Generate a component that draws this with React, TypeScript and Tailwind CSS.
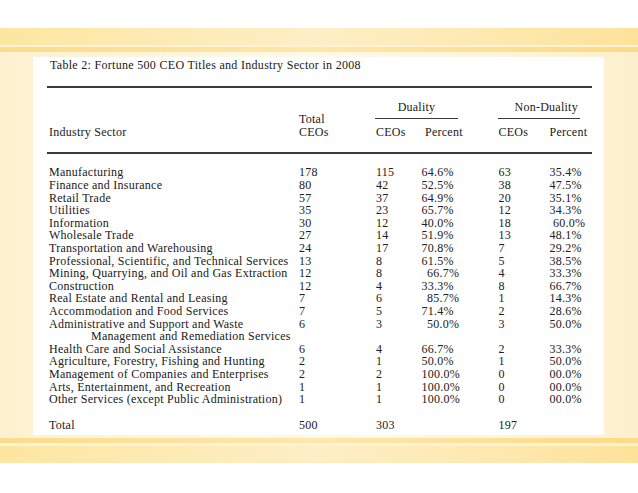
type Row = {
  sector: string;
  total: string;
  dc: string;
  dp: string;
  nc: string;
  np: string;
  dpShift?: boolean;
  npShift?: boolean;
  sub?: string;
};

const rows: Row[] = [
  { sector: "Manufacturing", total: "178", dc: "115", dp: "64.6%", nc: "63", np: "35.4%" },
  { sector: "Finance and Insurance", total: "80", dc: "42", dp: "52.5%", nc: "38", np: "47.5%" },
  { sector: "Retail Trade", total: "57", dc: "37", dp: "64.9%", nc: "20", np: "35.1%" },
  { sector: "Utilities", total: "35", dc: "23", dp: "65.7%", nc: "12", np: "34.3%" },
  { sector: "Information", total: "30", dc: "12", dp: "40.0%", nc: "18", np: "60.0%", npShift: true },
  { sector: "Wholesale Trade", total: "27", dc: "14", dp: "51.9%", nc: "13", np: "48.1%" },
  { sector: "Transportation and Warehousing", total: "24", dc: "17", dp: "70.8%", nc: "7", np: "29.2%" },
  { sector: "Professional, Scientific, and Technical Services", total: "13", dc: "8", dp: "61.5%", nc: "5", np: "38.5%" },
  { sector: "Mining, Quarrying, and Oil and Gas Extraction", total: "12", dc: "8", dp: "66.7%", nc: "4", np: "33.3%", dpShift: true },
  { sector: "Construction", total: "12", dc: "4", dp: "33.3%", nc: "8", np: "66.7%" },
  { sector: "Real Estate and Rental and Leasing", total: "7", dc: "6", dp: "85.7%", nc: "1", np: "14.3%", dpShift: true },
  { sector: "Accommodation and Food Services", total: "7", dc: "5", dp: "71.4%", nc: "2", np: "28.6%" },
  {
    sector: "Administrative and Support and Waste",
    total: "6",
    dc: "3",
    dp: "50.0%",
    nc: "3",
    np: "50.0%",
    dpShift: true,
    sub: "Management and Remediation Services",
  },
  { sector: "Health Care and Social Assistance", total: "6", dc: "4", dp: "66.7%", nc: "2", np: "33.3%" },
  { sector: "Agriculture, Forestry, Fishing and Hunting", total: "2", dc: "1", dp: "50.0%", nc: "1", np: "50.0%" },
  { sector: "Management of Companies and Enterprises", total: "2", dc: "2", dp: "100.0%", nc: "0", np: "00.0%" },
  { sector: "Arts, Entertainment, and Recreation", total: "1", dc: "1", dp: "100.0%", nc: "0", np: "00.0%" },
  { sector: "Other Services (except Public Administration)", total: "1", dc: "1", dp: "100.0%", nc: "0", np: "00.0%" },
];

const cols = "grid grid-cols-[250px_77px_45.5px_77px_51px_44px]";

export default function App() {
  return (
    <div
      className="w-[638px] h-[493px] bg-white flex flex-col overflow-hidden text-[#202020]"
      style={{ fontFamily: '"Liberation Serif", "Times New Roman", serif' }}
    >
      <div className="h-[28px] shrink-0" />
      {/* top band */}
      <div className="h-[17px] shrink-0 bg-gradient-to-r from-[#fde6a0] via-[#fdefc6] to-[#fde29a]" />
      <div className="h-[2px] shrink-0 bg-[#fef3d4]" />
      <div className="h-[5px] shrink-0 bg-gradient-to-r from-[#fcdc8c] via-[#fde7aa] to-[#fcda86]" />

      {/* page */}
      <div className="h-[386px] shrink-0 bg-gradient-to-r from-[#fdf1d0] via-[#fef9ea] to-[#fdf0cc] pt-[5px]">
        <div className="ml-[33px] w-[571px] h-[378px] bg-white">
          <div className="pt-[1px] pl-[17px] text-[12px] tracking-[0.3px] leading-[14px] whitespace-nowrap">
            Table 2: Fortune 500 CEO Titles and Industry Sector in 2008
          </div>
          <div className="mt-[14px] ml-[14px] w-[545px] h-[2px] bg-[#3a3a3a]" />

          {/* header */}
          <div className={`${cols} ml-[16px] mt-[12.7px] text-[12px] tracking-[0.25px] leading-[12.6px]`}>
            <div className="col-start-2 row-start-1 row-span-2 self-end">
              Total
              <br />
              CEOs
            </div>
            <div className="col-start-3 col-span-2 row-start-1">
              <div className="w-[83px] -ml-[1px] border-b border-[#3a3a3a] pb-[4.5px] text-center">Duality</div>
            </div>
            <div className="col-start-5 col-span-2 row-start-1">
              <div className="w-[82px] -ml-[1px] border-b border-[#3a3a3a] pb-[4.5px] pl-[17px] whitespace-nowrap">
                Non-Duality
              </div>
            </div>
            <div className="col-start-1 row-start-2 pt-[7px]">Industry Sector</div>
            <div className="col-start-3 row-start-2 pt-[7px]">CEOs</div>
            <div className="col-start-4 row-start-2 pt-[7px] pl-[3.5px]">Percent</div>
            <div className="col-start-5 row-start-2 pt-[7px]">CEOs</div>
            <div className="col-start-6 row-start-2 pt-[7px]">Percent</div>
          </div>

          <div className="mt-[13.4px] ml-[14px] w-[545px] h-[2px] bg-[#3a3a3a]" />

          {/* body */}
          <div className={`${cols} ml-[16px] mt-[12.7px] text-[12px] tracking-[0.25px] leading-[12.6px]`}>
            {rows.map((r) => (
              <div key={r.sector} className="contents">
                <div className="whitespace-nowrap">{r.sector}</div>
                <div>{r.total}</div>
                <div>{r.dc}</div>
                <div className={r.dpShift ? "pl-[5.5px]" : ""}>{r.dp}</div>
                <div>{r.nc}</div>
                <div className={r.npShift ? "pl-[3.5px]" : ""}>{r.np}</div>
                {r.sub && <div className="col-span-6 pl-[42px] whitespace-nowrap">{r.sub}</div>}
              </div>
            ))}
            <div className="mt-[13.6px]">Total</div>
            <div className="mt-[13.6px]">500</div>
            <div className="mt-[13.6px]">303</div>
            <div className="mt-[13.6px]" />
            <div className="mt-[13.6px]">197</div>
            <div className="mt-[13.6px]" />
          </div>
        </div>
      </div>

      {/* bottom band */}
      <div className="h-[5px] shrink-0 bg-gradient-to-r from-[#fcdc8c] via-[#fde7aa] to-[#fcda86]" />
      <div className="h-[3px] shrink-0 bg-[#fef3d4]" />
      <div className="h-[17px] shrink-0 bg-gradient-to-r from-[#fde6a0] via-[#fdefc6] to-[#fde29a]" />
      <div className="flex-1" />
    </div>
  );
}
